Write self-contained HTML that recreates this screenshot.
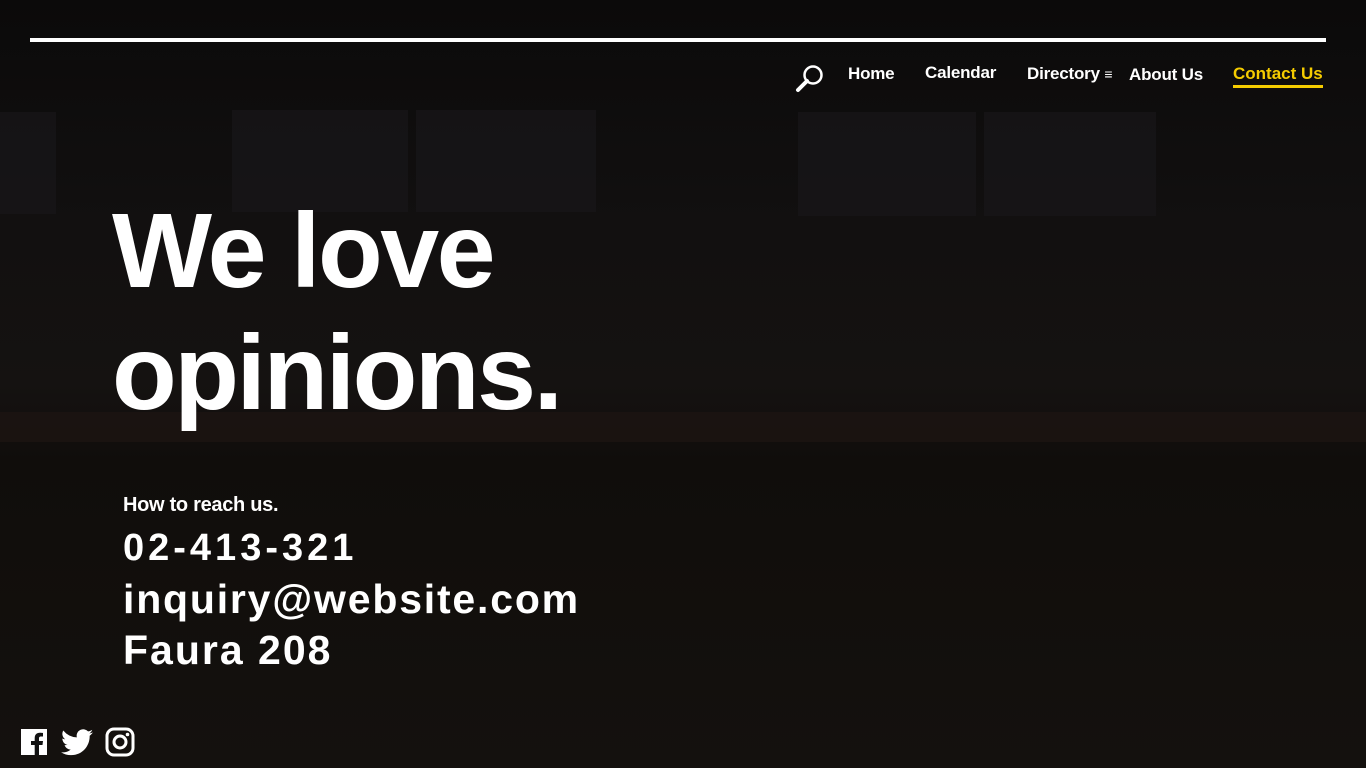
<!DOCTYPE html>
<html><head><meta charset="utf-8"><style>
html,body{margin:0;padding:0}
body{width:1366px;height:768px;overflow:hidden;position:relative;font-family:"Liberation Sans",sans-serif;color:#fff;
background:linear-gradient(180deg,#0b0a0a 0%,#121010 30%,#151211 50%,#100d0b 60%,#14110e 100%);}
.bg{position:absolute;background:#18171a;opacity:.7}
.line{position:absolute;left:30px;top:38px;width:1296px;height:4px;background:#fff}
.nav{position:absolute;top:64px;font-weight:bold;font-size:17px;letter-spacing:-0.2px}
h1{position:absolute;left:112px;top:190px;margin:0;font-size:106px;line-height:122px;font-weight:900;letter-spacing:-2.5px}
.s{position:absolute;left:123px;font-weight:bold}
</style></head><body>
<div class="bg" style="left:232px;top:110px;width:176px;height:102px"></div>
<div class="bg" style="left:416px;top:110px;width:180px;height:102px"></div>
<div class="bg" style="left:798px;top:112px;width:178px;height:104px"></div>
<div class="bg" style="left:984px;top:112px;width:172px;height:104px"></div>
<div class="bg" style="left:0;top:112px;width:56px;height:102px"></div>
<div class="bg" style="left:0;top:412px;width:1366px;height:30px;background:#1e1512"></div>
<div class="line"></div>
<svg style="position:absolute;left:795px;top:63px" width="30" height="30" viewBox="0 0 30 30"><circle cx="18" cy="12" r="8.5" fill="none" stroke="#fff" stroke-width="2.5"/><line x1="12" y1="18" x2="3" y2="27" stroke="#fff" stroke-width="4" stroke-linecap="round"/></svg>
<div class="nav" style="left:848px">Home</div>
<div class="nav" style="left:925px;top:63px">Calendar</div>
<div class="nav" style="left:1027px">Directory <span style="font-weight:normal;font-size:14px">≡</span></div>
<div class="nav" style="left:1129px;top:65px">About Us</div>
<div class="nav" style="left:1233px;color:#f5cc00;border-bottom:3px solid #f5cc00;padding-bottom:1px;letter-spacing:0">Contact Us</div>
<h1>We love<br>opinions.</h1>
<div class="s" style="top:494px;font-size:20px;letter-spacing:-0.3px">How to reach us.</div>
<div class="s" style="top:527px;font-size:38px;letter-spacing:4px">02-413-321</div>
<div class="s" style="top:576px;font-size:41px;letter-spacing:1.8px">inquiry@website.com</div>
<div class="s" style="top:627px;font-size:41px;letter-spacing:2px">Faura 208</div>
<svg style="position:absolute;left:21px;top:729px" width="26" height="26" viewBox="0 0 26 26"><rect width="26" height="26" fill="#fff"/><path d="M18 26V16h3.5l.5-4h-4V9.5c0-1.2.4-2 2-2H22V4c-.4 0-1.7-.2-3.2-.2-3.1 0-5.1 1.9-5.1 5.3V12H10v4h3.7v10z" fill="#111"/></svg>
<svg style="position:absolute;left:61px;top:729px" width="32" height="27" viewBox="0 0 24 20"><path d="M24 2.4c-.9.4-1.8.6-2.8.8 1-.6 1.8-1.6 2.2-2.7-1 .6-2 1-3.1 1.2A4.9 4.9 0 0 0 11.9 6.2 14 14 0 0 1 1.7 1 4.9 4.9 0 0 0 3.2 7.6c-.8 0-1.6-.3-2.2-.6 0 2.4 1.7 4.4 3.9 4.8-.7.2-1.5.2-2.2.1.6 2 2.4 3.4 4.6 3.4A9.9 9.9 0 0 1 0 17.3 14 14 0 0 0 7.5 19.5c9.1 0 14-7.5 14-14v-.6c1-.7 1.8-1.6 2.5-2.5z" fill="#fff"/></svg>
<svg style="position:absolute;left:105px;top:727px" width="30" height="30" viewBox="0 0 30 30"><rect x="2" y="2" width="26" height="26" rx="7" fill="none" stroke="#fff" stroke-width="3"/><circle cx="15" cy="15" r="6" fill="none" stroke="#fff" stroke-width="3"/><circle cx="22.5" cy="7.5" r="1.8" fill="#fff"/></svg>
</body></html>
